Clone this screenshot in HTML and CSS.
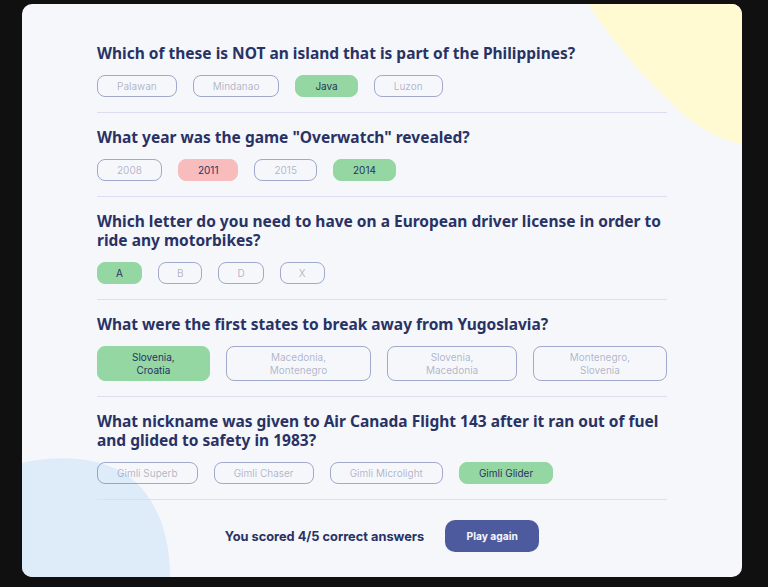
FILE: index.html
```html
<!DOCTYPE html>
<html lang="en">
<head>
<meta charset="utf-8">
<title>Quizzical</title>
<link rel="stylesheet" href="styles.css">
</head>
<body>
<main class="card">
  <svg class="blob blob-yellow" width="154" height="142" viewBox="0 0 154 142" aria-hidden="true">
    <path d="M0 0 Q40 60 90 105 Q120 133 154 140 L154 0 Z" fill="#FFFAD1"/>
  </svg>
  <svg class="blob blob-blue" width="150" height="120" viewBox="0 0 150 120" aria-hidden="true">
    <path d="M0 6 C30 -1 70 -2 100 15 C130 33 148 70 148 120 L0 120 Z" fill="#DEEBF8"/>
  </svg>
  <div class="quiz">
    <section class="question">
      <h2 class="q-text">Which of these is NOT an island that is part of the Philippines?</h2>
      <div class="answers">
        <span class="answer">Palawan</span>
        <span class="answer">Mindanao</span>
        <span class="answer correct">Java</span>
        <span class="answer">Luzon</span>
      </div>
    </section>
    <section class="question">
      <h2 class="q-text">What year was the game "Overwatch" revealed?</h2>
      <div class="answers">
        <span class="answer">2008</span>
        <span class="answer wrong">2011</span>
        <span class="answer">2015</span>
        <span class="answer correct">2014</span>
      </div>
    </section>
    <section class="question">
      <h2 class="q-text">Which letter do you need to have on a European driver license in order to ride any motorbikes?</h2>
      <div class="answers">
        <span class="answer single correct">A</span>
        <span class="answer single">B</span>
        <span class="answer single">D</span>
        <span class="answer single">X</span>
      </div>
    </section>
    <section class="question">
      <h2 class="q-text">What were the first states to break away from Yugoslavia?</h2>
      <div class="answers wide">
        <span class="answer correct">Slovenia, Croatia</span>
        <span class="answer">Macedonia, Montenegro</span>
        <span class="answer">Slovenia, Macedonia</span>
        <span class="answer">Montenegro, Slovenia</span>
      </div>
    </section>
    <section class="question">
      <h2 class="q-text">What nickname was given to Air Canada Flight 143 after it ran out of fuel and glided to safety in 1983?</h2>
      <div class="answers">
        <span class="answer">Gimli Superb</span>
        <span class="answer">Gimli Chaser</span>
        <span class="answer">Gimli Microlight</span>
        <span class="answer correct">Gimli Glider</span>
      </div>
    </section>
    <div class="result">
      <p class="score">You scored 4/5 correct answers</p>
      <button class="play" type="button">Play again</button>
    </div>
  </div>
</main>
</body>
</html>
```
FILE: styles.css
```css
html, body {
  margin: 0;
  padding: 0;
}
body {
  background: #111010;
  padding: 4px 26px 10px 22px;
  font-family: Inter, "Liberation Sans", sans-serif;
  color: #293264;
}
.card {
  position: relative;
  overflow: hidden;
  width: 720px;
  height: 573px;
  box-sizing: border-box;
  background: #F5F7FB;
  border-radius: 10px;
  padding: 25px 75px 0;
}
.blob {
  position: absolute;
  z-index: 0;
  display: block;
}
.blob-yellow {
  top: 0;
  right: 0;
}
.blob-blue {
  bottom: 0;
  left: 0;
}
.quiz {
  position: relative;
  z-index: 1;
}
.question {
  padding: 15px 0 15px;
  border-bottom: 1px solid #DBDEF0;
}
.q-text {
  margin: 0 0 12px;
  font-family: "Noto Sans", "Open Sans", sans-serif;
  font-weight: 700;
  font-size: 15.5px;
  line-height: 19px;
  color: #293264;
}
.answers {
  display: flex;
  gap: 16px;
}
.answer {
  box-sizing: border-box;
  border: 1px solid rgba(77, 91, 158, 0.5);
  border-radius: 8px;
  padding: 4px 19px;
  font-size: 10px;
  line-height: 12px;
  text-align: center;
  color: rgba(41, 50, 100, 0.35);
  white-space: nowrap;
}
.answer.single {
  padding: 4px 18px;
}
.wide .answer {
  flex: 0 1 auto;
  white-space: normal;
  line-height: 12.5px;
}
.answer.correct {
  background: #94D7A2;
  border-color: #94D7A2;
  color: #293264;
}
.answer.wrong {
  background: #F8BCBC;
  border-color: #F8BCBC;
  color: #293264;
}
.result {
  display: flex;
  justify-content: center;
  align-items: center;
  gap: 21px;
  padding-top: 20px;
}
.score {
  margin: 0;
  font-weight: 700;
  font-size: 12.8px;
  color: #293264;
}
.play {
  width: 94px;
  height: 32px;
  border: none;
  border-radius: 10px;
  background: #4D5B9E;
  color: #F5F7FB;
  font-family: Inter, "Liberation Sans", sans-serif;
  font-weight: 700;
  font-size: 10.24px;
}
```
